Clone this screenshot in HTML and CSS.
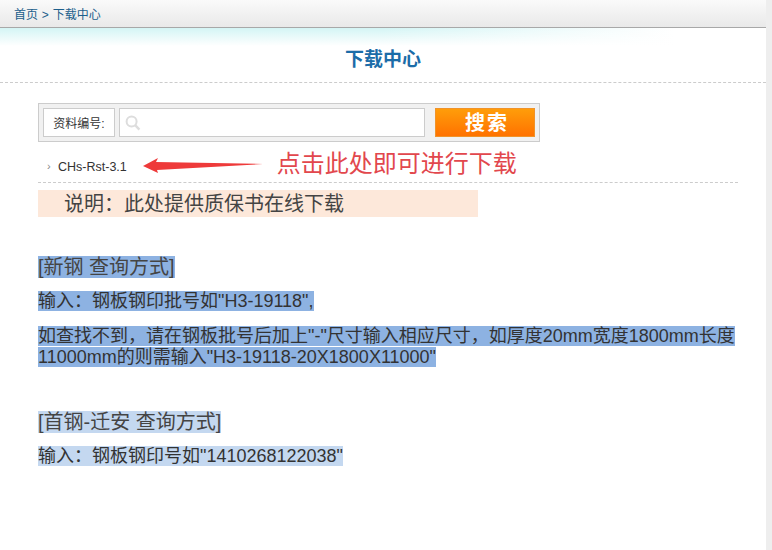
FILE: index.html
```html
<!DOCTYPE html>
<html lang="zh-CN">
<head>
  <meta charset="UTF-8" />
  <title>下载中心</title>
  <link rel="stylesheet" href="styles.css">
</head>
<body>
  <div class="page">
    <div class="crumb"><a href="#">首页</a> &gt; <a href="#">下载中心</a></div>
    <div class="glow"></div>
    <h1>下载中心</h1>

    <div class="content">
      <form class="search">
        <span class="search-label">资料编号:</span>
        <span class="search-input">
          <svg width="16" height="16" viewBox="0 0 16 16"><circle cx="6.6" cy="6.6" r="5" fill="none" stroke="#ddd" stroke-width="2"/><path d="M10.4 10.4L14.4 14.6" stroke="#ddd" stroke-width="2.4" fill="none"/></svg>
        </span>
        <button type="button">搜索</button>
      </form>

      <div class="result">
        <span class="tick">›</span>
        <a href="#" class="file">CHs-Rst-3.1</a>
        <svg class="pointer" width="122" height="18" viewBox="0 0 122 18"><polygon points="1,9 16,1 14,5 121,7 15,13 16,16" fill="#ee3a3a"/></svg>
        <span class="hint">点击此处即可进行下载</span>
      </div>

      <div class="note">说明：此处提供质保书在线下载</div>

      <h3 class="q-title"><span class="sel">[新钢 查询方式]</span></h3>
      <p class="q-first"><span class="sel">输入：钢板钢印批号如"H3-19118",</span></p>
      <p class="q-more"><span class="sel">如查找不到，请在钢板批号后加上"-"尺寸输入相应尺寸，如厚度20mm宽度1800mm长度11000mm的则需输入"H3-19118-20X1800X11000"</span></p>

      <h3 class="q-title second"><span class="sel light">[首钢-迁安 查询方式]</span></h3>
      <p class="q-first"><span class="sel light">输入：钢板钢印号如"1410268122038"</span></p>
    </div>
  </div>
</body>
</html>
```

FILE: styles.css
```css
html, body {
  margin: 0;
  padding: 0;
  height: 550px;
  overflow: hidden;
}
body {
  background: #eee;
  font-family: "Liberation Sans", "Noto Sans CJK SC", sans-serif;
  color: #333;
}
a {
  text-decoration: none;
}
.page {
  width: 766px;
  height: 550px;
  background: #fff;
}
.crumb {
  height: 27px;
  line-height: 31px;
  padding-left: 14px;
  font-size: 12px;
  word-spacing: 0.5px;
  color: #1c5f8c;
  background: linear-gradient(to bottom, #fafafa, #e9e9e9);
  border-bottom: 1px solid #a8a8a8;
}
.crumb a {
  color: #1c5f8c;
}
.glow {
  height: 18px;
  background:
    linear-gradient(to bottom, rgba(255,255,255,0), #fff),
    linear-gradient(to right, #d4f5f5, #d4f5f5 50%, #fff 88%);
}
h1 {
  margin: 0;
  height: 36px;
  line-height: 27px;
  text-align: center;
  font-size: 19px;
  font-weight: bold;
  color: #1b6ca8;
  border-bottom: 1px dashed #ccc;
}
.content {
  padding: 20px 28px 0 38px;
}
.search {
  display: flex;
  align-items: flex-start;
  width: 492px;
  height: 29px;
  padding: 4px;
  background: #f1f1f1;
  border: 1px solid #ccc;
}
.search-label {
  width: 70px;
  height: 27px;
  line-height: 30px;
  text-align: center;
  font-size: 12px;
  color: #333;
  background: #fff;
  border: 1px solid #ccc;
}
.search-input {
  display: flex;
  align-items: center;
  width: 299px;
  height: 27px;
  margin-left: 4px;
  padding-left: 5px;
  background: #fff;
  border: 1px solid #ccc;
}
button {
  width: 100px;
  height: 29px;
  margin-left: 10px;
  padding: 2px 0 0 4px;
  border: 1px solid #f0932a;
  background: linear-gradient(to bottom, #ff9d0a, #ff7200);
  color: #fff;
  font-family: inherit;
  font-size: 20px;
  font-weight: bold;
  letter-spacing: 2px;
  line-height: 25px;
}
.result {
  display: flex;
  align-items: center;
  height: 36px;
  width: 700px;
  padding-top: 4px;
  border-bottom: 1px dashed #ccc;
}
.tick {
  width: 20px;
  margin-top: 4px;
  padding-left: 9px;
  box-sizing: border-box;
  font-size: 11px;
  color: #888;
}
.file {
  margin-top: 6px;
  font-size: 12.5px;
  color: #333;
}
.pointer {
  margin-left: 15px;
  margin-top: 4px;
}
.hint {
  margin-left: 13px;
  font-size: 24px;
  line-height: 30px;
  color: #e2474d;
}
.note {
  width: 414px;
  height: 27px;
  margin-top: 7px;
  padding-left: 26px;
  line-height: 29px;
  font-size: 20px;
  background: #fde8da;
  color: #444;
}
.sel {
  background: #8db2e2;
}
.sel.light {
  background: #c4d8f0;
}
.q-title {
  margin: 38px 0 0;
  font-size: 20px;
  font-weight: normal;
  line-height: 24px;
  color: #444;
}
.q-title.second {
  margin-top: 42px;
}
.q-first, .q-more {
  font-size: 18px;
  line-height: 21px;
  color: #333;
}
.q-first {
  margin: 12px 0 0;
}
.q-more {
  margin: 14px 0 0;
}
```
